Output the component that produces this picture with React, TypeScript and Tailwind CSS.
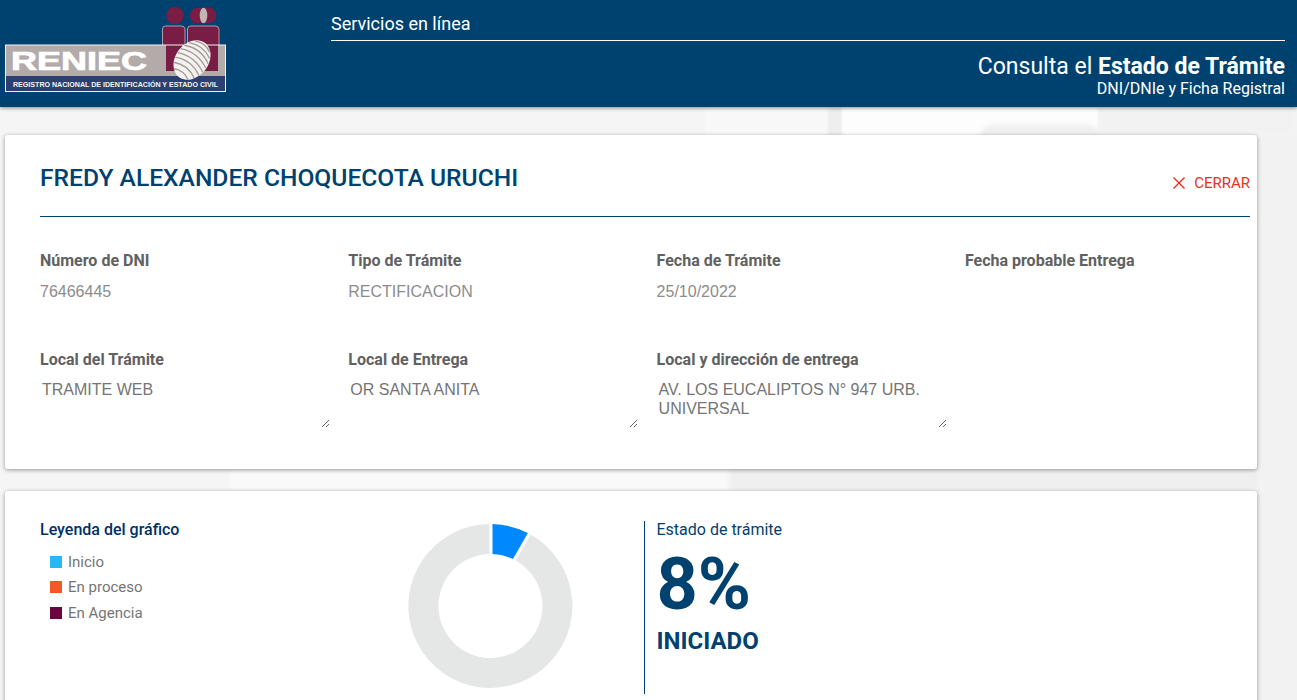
const fields = [
  { label: "Número de DNI", value: "76466445" },
  { label: "Tipo de Trámite", value: "RECTIFICACION" },
  { label: "Fecha de Trámite", value: "25/10/2022" },
  { label: "Fecha probable Entrega", value: "" },
];

const places = [
  { label: "Local del Trámite", value: "TRAMITE WEB" },
  { label: "Local de Entrega", value: "OR SANTA ANITA" },
  { label: "Local y dirección de entrega", value: "AV. LOS EUCALIPTOS N° 947 URB. UNIVERSAL" },
];

const legend = [
  { name: "Inicio", color: "bg-[#29b6f6]" },
  { name: "En proceso", color: "bg-[#f4572a]" },
  { name: "En Agencia", color: "bg-[#6a0540]" },
];

const Logo = () => (
  <svg width="226" height="94" viewBox="0 0 226 94" className="block">
    <circle cx="175" cy="15.5" r="8.7" fill="#7a1d44" />
    <circle cx="198" cy="15.5" r="8" fill="#7a1d44" />
    <circle cx="208" cy="15.5" r="8.3" fill="#7a1d44" />
    <ellipse cx="203.5" cy="15.5" rx="3.8" ry="7.8" fill="#c4b4b6" />
    <path d="M162.5 48V29q0-3 3-3h16q3 0 3.5 3v19z" fill="#7a1d44" stroke="#f1e6ea" strokeWidth="0.6" />
    <path d="M187.5 48V29q0-3 3-3h25q3 0 3.5 3v19z" fill="#7a1d44" stroke="#f1e6ea" strokeWidth="0.6" />
    <rect x="5.5" y="45" width="220" height="46.5" fill="#b3aba9" />
    <rect x="166" y="45" width="16" height="26" fill="#7a1d44" />
    <rect x="190" y="45" width="28" height="26" fill="#7a1d44" />
    <rect x="6" y="76" width="219" height="15" fill="#2b3f72" />
    <rect x="5.5" y="45" width="220" height="46.5" fill="none" stroke="#f2f2f2" />
    <text x="11" y="70" fontFamily="Liberation Sans" fontWeight="700" fontSize="25" fill="#ffffff" stroke="#ffffff" strokeWidth="0.7" textLength="136" lengthAdjust="spacingAndGlyphs">RENIEC</text>
    <text x="13" y="86.5" fontFamily="Liberation Sans" fontWeight="700" fontSize="7" fill="#f4f4f4" textLength="205" lengthAdjust="spacingAndGlyphs">REGISTRO NACIONAL DE IDENTIFICACIÓN  Y ESTADO CIVIL</text>
    <g transform="rotate(38 192 60)">
      <ellipse cx="192" cy="60" rx="16.5" ry="21.5" fill="#f4f1ef" />
      <g fill="none" stroke="#a39b96" strokeWidth="1.3">
        <path d="M183 43q9-5 18 0" />
        <path d="M179 48q13-7 26 0" />
        <path d="M177 53q15-8 30 0" />
        <path d="M176 58q16-8 32 0" />
        <path d="M176 63q16-8 32 0" />
        <path d="M177 68q15-8 30 0" />
        <path d="M179 73q13-7 26 0" />
        <path d="M183 78q9-5 18 0" />
      </g>
    </g>
  </svg>
);

const Donut = () => (
  <svg width="166" height="166" viewBox="0 0 166 166" className="block">
    <path
      d="M81.5 1A82 82 0 1 0 122.7 11.6L107.8 37.6A52 52 0 1 1 81.5 31Z"
      fill="#e5e7e6"
    />
    <path
      d="M84.5 1.1A82 82 0 0 1 119.9 10L104.9 36A52 52 0 0 0 84.5 31Z"
      fill="#0088ff"
    />
  </svg>
);

export default function App() {
  return (
    <div className="relative h-[700px] overflow-hidden bg-[#f5f5f5] font-['Roboto',sans-serif]">
      <div className="absolute left-[705px] top-[107px] h-[30px] w-[125px] bg-[#f8f8f8] blur-[2px]" />
      <div className="absolute left-[828px] top-[107px] h-[30px] w-[14px] bg-[#eeeeee] blur-[1px]" />
      <div className="absolute left-[842px] top-[107px] h-[30px] w-[256px] bg-[#fdfdfd] blur-[1px]" />
      <div className="absolute left-[980px] top-[124px] h-[14px] w-[120px] rounded-t-full bg-[#f0f0f0] blur-[2px]" />
      <div className="absolute left-[1100px] top-[107px] h-[30px] w-[197px] bg-[#f2f2f2] blur-[2px]" />
      <div className="absolute left-[230px] top-[469px] h-[22px] w-[500px] bg-[#f9f9f9] blur-[2px]" />
      <div className="absolute left-[730px] top-[469px] h-[22px] w-[567px] bg-[#efefef] blur-[2px]" />
      <div className="absolute left-[1257px] top-[137px] h-[563px] w-[40px] bg-[#f2f2f2]" />

      <header className="relative flex h-[107px] bg-[#00426f] pr-3 shadow-[0_1px_4px_rgba(0,0,0,0.45)]">
        <div className="w-[331px] shrink-0">
          <Logo />
        </div>
        <div className="flex flex-1 flex-col text-white">
          <div className="flex h-[41px] items-center border-b border-white pt-[7px] text-lg leading-none">
            Servicios en línea
          </div>
          <div className="mt-[12px] text-right text-[23px] leading-7">
            Consulta el <span className="font-bold">Estado de Trámite</span>
          </div>
          <div className="-mt-px text-right text-base leading-[17px]">DNI/DNIe y Ficha Registral</div>
        </div>
      </header>

      <main className="relative box-content flex w-[1252px] flex-col gap-[22px] pt-[28px] pl-[5px]">
        <section className="h-[334px] rounded-[3px] bg-white pr-[7px] pl-[35px] shadow-[0_1px_4px_rgba(0,0,0,0.4)]">
          <div className="flex h-[82px] justify-between border-b border-[#00426f]">
            <h1 className="pt-[28px] text-[24.6px] leading-[30px] font-medium text-[#00426f]">
              FREDY ALEXANDER CHOQUECOTA URUCHI
            </h1>
            <button className="flex h-fit items-center gap-[8px] pt-[39px] text-[15px] leading-[18px] text-[#e8321a]">
              <svg width="14" height="14" viewBox="0 0 14 14" fill="none" stroke="#e8220f" strokeWidth="1.2">
                <path d="M1.5 1.5l11 11M12.5 1.5l-11 11" />
              </svg>
              CERRAR
            </button>
          </div>

          <div className="mt-[33px] grid w-[1234px] grid-cols-[308.3px_308.3px_308.3px_308.3px]">
            {fields.map((f) => (
              <div key={f.label}>
                <div className="text-base leading-[22px] font-bold text-[#616161]">{f.label}</div>
                <div className="mt-[9px] h-[22px] font-['Liberation_Sans',sans-serif] text-base leading-[22px] text-[#8c8c8c]">
                  {f.value}
                </div>
              </div>
            ))}
          </div>

          <div className="mt-[46px] grid w-[1234px] grid-cols-[308.3px_308.3px_308.3px]">
            {places.map((p) => (
              <div key={p.label}>
                <div className="text-base leading-[22px] font-bold text-[#616161]">{p.label}</div>
                <textarea
                  readOnly
                  value={p.value}
                  className="mt-[7px] block h-[50px] w-[290px] overflow-hidden p-[2px] font-['Liberation_Sans',sans-serif] text-base leading-[19px] text-[#757575] outline-none"
                />
              </div>
            ))}
          </div>
        </section>

        <section className="flex h-[400px] rounded-[3px] bg-white pt-[30px] pl-[35px] shadow-[0_1px_4px_rgba(0,0,0,0.4)]">
          <div className="w-[368px] shrink-0">
            <div className="text-base leading-[18px] font-medium text-[#00306b]">Leyenda del gráfico</div>
            <ul className="mt-[14px] flex flex-col gap-[7px] pl-[10px]">
              {legend.map((l) => (
                <li key={l.name} className="flex h-[18.3px] items-center gap-[6px] text-[15px] text-[#757575]">
                  <span className={`h-3 w-3 ${l.color}`} />
                  {l.name}
                </li>
              ))}
            </ul>
          </div>
          <div className="w-[236px] shrink-0 pt-[2px]">
            <Donut />
          </div>
          <div className="h-[173px] border-l border-[#00426f] pl-[11.5px] text-[#00426f]">
            <div className="text-base leading-[18px]">Estado de trámite</div>
            <div className="mt-[4px] text-[72px] leading-[84px] font-bold">8%</div>
            <div className="text-2xl leading-[28px] font-bold">INICIADO</div>
          </div>
        </section>
      </main>
    </div>
  );
}
